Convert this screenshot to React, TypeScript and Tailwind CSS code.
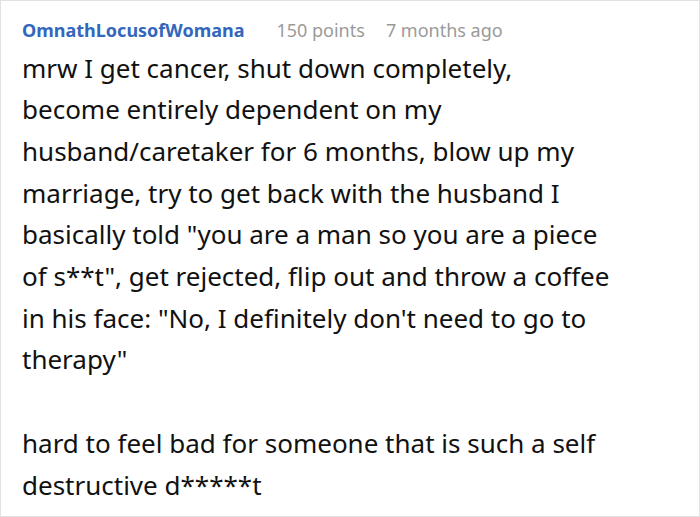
const firstParagraph = [
  "mrw I get cancer, shut down completely,",
  "become entirely dependent on my",
  "husband/caretaker for 6 months, blow up my",
  "marriage, try to get back with the husband I",
  'basically told "you are a man so you are a piece',
  'of s**t", get rejected, flip out and throw a coffee',
  'in his face: "No, I definitely don\'t need to go to',
  'therapy"',
];

const secondParagraph = ["hard to feel bad for someone that is such a self", "destructive d*****t"];

export default function App() {
  return (
    <div
      className="w-[700px] h-[517px] bg-white border border-[#e2e2e2] px-[21px] pt-[17px] overflow-hidden"
      style={{ fontFamily: '"Noto Sans", sans-serif' }}
    >
      <div className="flex items-baseline text-[18px] leading-[24px] whitespace-nowrap">
        <span className="font-bold text-[#3367bd]">OmnathLocusofWomana</span>
        <span className="ml-[32px] text-[#9a9a9a]">150 points</span>
        <span className="ml-[21px] text-[#9a9a9a]">7 months ago</span>
      </div>
      <div className="mt-[5.5px] text-[26px] leading-[41.7px] text-[#111] whitespace-nowrap">
        <div>
          {firstParagraph.map((line) => (
            <div key={line}>{line}</div>
          ))}
        </div>
        <div className="mt-[41.7px]">
          {secondParagraph.map((line) => (
            <div key={line}>{line}</div>
          ))}
        </div>
      </div>
    </div>
  );
}
